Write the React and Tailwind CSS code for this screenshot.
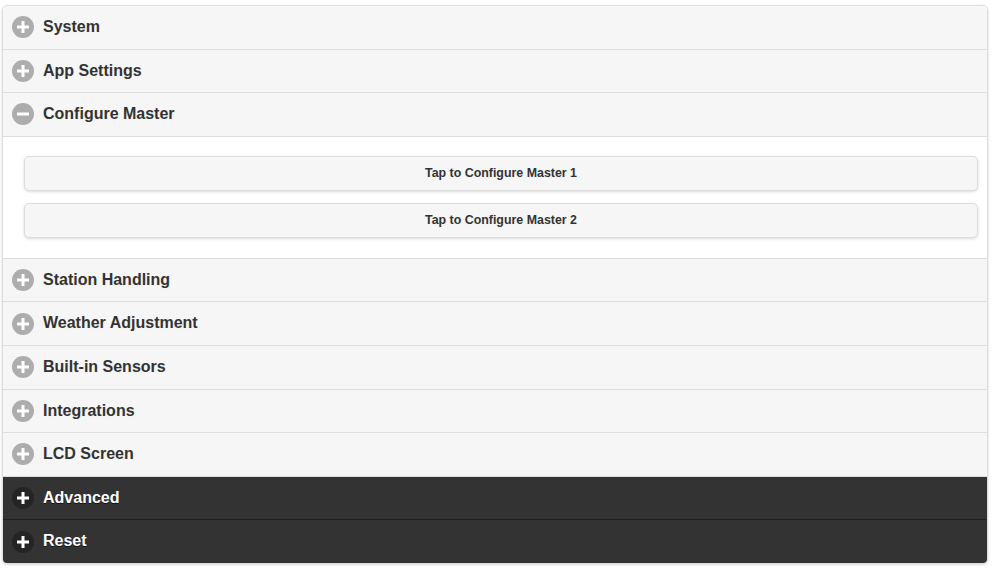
import React from "react";

const sections = [
  { title: "System" },
  { title: "App Settings" },
  { title: "Configure Master", open: true },
  { title: "Station Handling" },
  { title: "Weather Adjustment" },
  { title: "Built-in Sensors" },
  { title: "Integrations" },
  { title: "LCD Screen" },
  { title: "Advanced", dark: true },
  { title: "Reset", dark: true },
];

const ToggleIcon = ({ open, dark }) => (
  <span
    className={`absolute left-[9px] top-1/2 -translate-y-1/2 flex items-center justify-center w-[22px] h-[22px] rounded-full ${
      dark ? "bg-[#242424]" : "bg-[#adadad]"
    }`}
  >
    <svg width="14" height="14" viewBox="0 0 14 14">
      <rect x="1" y="5.5" width="12" height="3" fill="#fff" />
      {!open && <rect x="5.5" y="1" width="3" height="12" fill="#fff" />}
    </svg>
  </span>
);

const Header = ({ title, open, dark, last }) => (
  <div
    className={`relative pl-[40px] pr-4 py-[11px] text-base leading-[20.6px] font-bold ${
      dark
        ? "bg-[#333] text-white [text-shadow:0_1px_0_#111] border-[#1f1f1f]"
        : "bg-[#f6f6f6] text-[#333] [text-shadow:0_1px_0_#f3f3f3] border-[#ddd]"
    } ${last ? "" : "border-b"}`}
  >
    <ToggleIcon open={open} dark={dark} />
    {title}
  </div>
);

const MasterButton = ({ label }) => (
  <button className="w-full h-[35px] rounded-[5px] border border-[#ddd] bg-[#f6f6f6] text-[12.4px] font-bold text-[#333] shadow-[0_1px_3px_rgba(0,0,0,0.15)] [text-shadow:0_1px_0_#f3f3f3]">
    {label}
  </button>
);

export default function App() {
  return (
    <div className="bg-white min-h-[572px] pt-[5px] pl-[2px] pr-[12px] font-['Liberation_Sans',Arial,sans-serif]">
      <div className="rounded-[5px] overflow-hidden border border-[#ddd] shadow-[0_1px_3px_rgba(0,0,0,0.15)]">
        {sections.map((s, i) => (
          <div key={s.title}>
            <Header
              title={s.title}
              open={s.open}
              dark={s.dark}
              last={i === sections.length - 1}
            />
            {s.open && (
              <div className="bg-white border-b border-[#ddd] pt-[19px] pb-[20px] pl-[21px] pr-[9px] flex flex-col gap-[12px]">
                <MasterButton label="Tap to Configure Master 1" />
                <MasterButton label="Tap to Configure Master 2" />
              </div>
            )}
          </div>
        ))}
      </div>
    </div>
  );
}
